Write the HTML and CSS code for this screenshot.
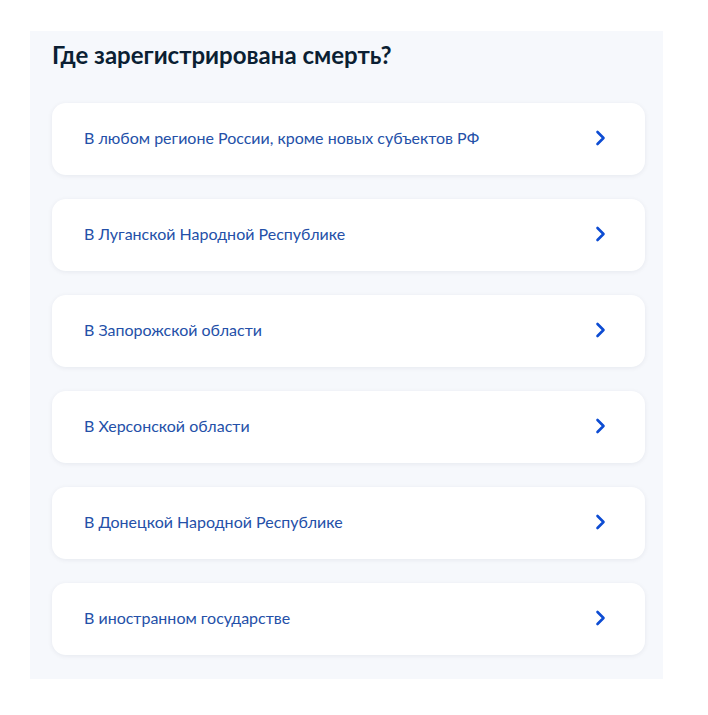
FILE: index.html
```html
<!DOCTYPE html>
<html lang="ru">
<head>
<meta charset="utf-8">
<title>Где зарегистрирована смерть?</title>
<link rel="stylesheet" href="styles.css">
</head>
<body>
<main class="panel">
  <h1 class="title">Где зарегистрирована смерть?</h1>
  <ul class="options">
    <li class="option"><span class="option-text">В любом регионе России, кроме новых субъектов РФ</span><svg class="chev" viewBox="0 0 11 16" width="11" height="16"><path d="M2.5 2l6 6-6 6" fill="none" stroke="#0d4cd3" stroke-width="2.6" stroke-linecap="round" stroke-linejoin="round"/></svg></li>
    <li class="option"><span class="option-text">В Луганской Народной Республике</span><svg class="chev" viewBox="0 0 11 16" width="11" height="16"><path d="M2.5 2l6 6-6 6" fill="none" stroke="#0d4cd3" stroke-width="2.6" stroke-linecap="round" stroke-linejoin="round"/></svg></li>
    <li class="option"><span class="option-text">В Запорожской области</span><svg class="chev" viewBox="0 0 11 16" width="11" height="16"><path d="M2.5 2l6 6-6 6" fill="none" stroke="#0d4cd3" stroke-width="2.6" stroke-linecap="round" stroke-linejoin="round"/></svg></li>
    <li class="option"><span class="option-text">В Херсонской области</span><svg class="chev" viewBox="0 0 11 16" width="11" height="16"><path d="M2.5 2l6 6-6 6" fill="none" stroke="#0d4cd3" stroke-width="2.6" stroke-linecap="round" stroke-linejoin="round"/></svg></li>
    <li class="option"><span class="option-text">В Донецкой Народной Республике</span><svg class="chev" viewBox="0 0 11 16" width="11" height="16"><path d="M2.5 2l6 6-6 6" fill="none" stroke="#0d4cd3" stroke-width="2.6" stroke-linecap="round" stroke-linejoin="round"/></svg></li>
    <li class="option"><span class="option-text">В иностранном государстве</span><svg class="chev" viewBox="0 0 11 16" width="11" height="16"><path d="M2.5 2l6 6-6 6" fill="none" stroke="#0d4cd3" stroke-width="2.6" stroke-linecap="round" stroke-linejoin="round"/></svg></li>
  </ul>
</main>
</body>
</html>
```
FILE: styles.css
```css
html, body {
  margin: 0;
  padding: 0;
  background: #ffffff;
}
body {
  padding: 31px 0 0 30px;
  font-family: Lato, "Noto Sans", sans-serif;
}
.panel {
  width: 633px;
  box-sizing: border-box;
  background: #f6f8fc;
  padding: 12px 18px 24px 22px;
}
.title {
  margin: 0;
  font-size: 24px;
  line-height: 24px;
  font-weight: 700;
  color: #0b1f33;
  padding: 0 0 36px 0;
}
.options {
  list-style: none;
  margin: 0;
  padding: 0;
  display: flex;
  flex-direction: column;
  gap: 24px;
}
.option {
  height: 72px;
  box-sizing: border-box;
  background: #ffffff;
  border-radius: 14px;
  box-shadow: 0 1px 5px rgba(11, 31, 51, 0.07);
  display: flex;
  align-items: center;
  justify-content: space-between;
  padding: 0 39px 0 32px;
}
.option-text {
  font-size: 16px;
  line-height: 20px;
  color: #2450a8;
  padding-bottom: 3px;
}
.chev {
  display: block;
  margin-bottom: 2px;
}
```
